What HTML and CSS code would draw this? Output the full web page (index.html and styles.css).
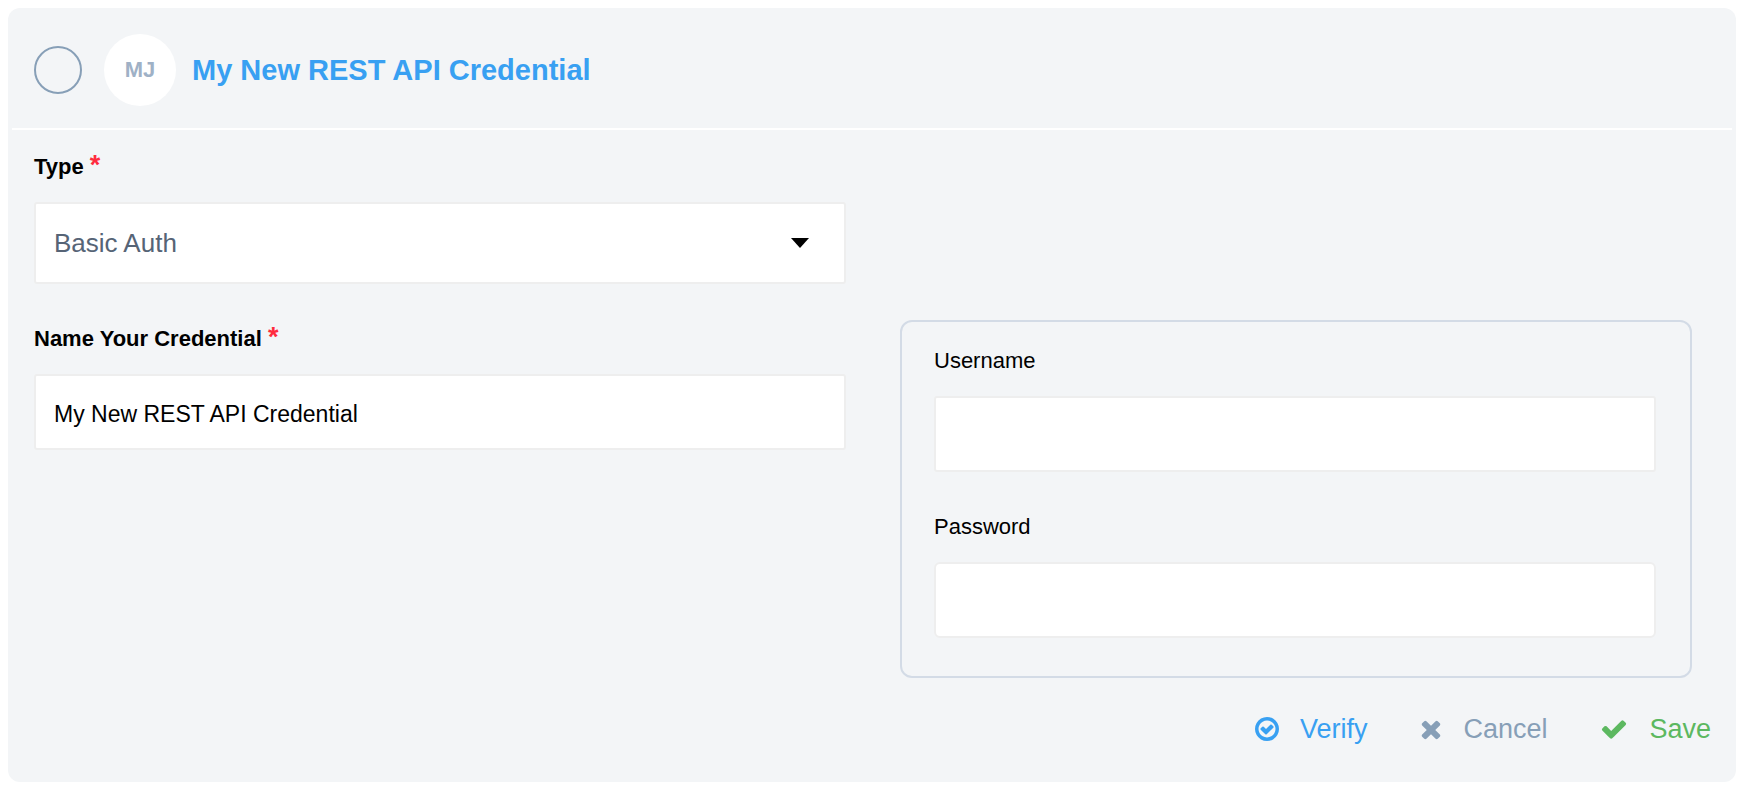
FILE: index.html
```html
<!DOCTYPE html>
<html lang="en">
<head>
<meta charset="utf-8">
<meta name="viewport" content="width=device-width, initial-scale=1">
<title>Credential</title>
<link rel="stylesheet" href="styles.css">
</head>
<body>
<form class="card">
  <header class="card-header">
    <input class="pick" type="checkbox" aria-label="Select credential">
    <span class="avatar">MJ</span>
    <h1 class="title"><a href="#credential">My New REST API Credential</a></h1>
  </header>
  <div class="fields">
    <div class="field field-type">
      <label class="label label-strong" for="type">Type <span class="required">*</span></label>
      <div class="select-wrap">
        <select class="control select" id="type" required>
          <option>Basic Auth</option>
        </select>
        <svg class="caret" viewBox="0 0 18 10" aria-hidden="true"><path d="M0 0h18L9 10z"/></svg>
      </div>
    </div>
    <div class="field field-name">
      <label class="label label-strong" for="name">Name Your Credential <span class="required">*</span></label>
      <input class="control" id="name" type="text" value="My New REST API Credential" required>
    </div>
    <fieldset class="login" aria-label="Basic Auth">
      <div class="field">
        <label class="label" for="username">Username</label>
        <input class="control" id="username" type="text">
      </div>
      <div class="field">
        <label class="label" for="password">Password</label>
        <input class="control control-password" id="password" type="password">
      </div>
    </fieldset>
  </div>
  <footer class="actions">
    <button class="action verify" type="button">
      <svg class="icon" viewBox="128 0 1536 1792" aria-hidden="true"><path d="M1299 813l-422 422q-19 19-45 19t-45-19l-294-294q-19-19-19-45t19-45l102-102q19-19 45-19t45 19l147 147 275-275q19-19 45-19t45 19l102 102q19 19 19 45t-19 45zm141 83q0-148-73-273t-198-198-273-73-273 73-198 198-73 273 73 273 198 198 273 73 273-73 198-198 73-273zm224 0q0 209-103 385.5t-279.5 279.5-385.5 103-385.5-103-279.5-279.5-103-385.5 103-385.5 279.5-279.5 385.5-103 385.5 103 279.5 279.5 103 385.5z"/></svg>
      Verify
    </button>
    <button class="action cancel" type="button">
      <svg class="icon" viewBox="192 0 1408 1792" aria-hidden="true"><path d="M1490 1322q0 40-28 68l-136 136q-28 28-68 28t-68-28l-294-294-294 294q-28 28-68 28t-68-28l-136-136q-28-28-28-68t28-68l294-294-294-294q-28-28-28-68t28-68l136-136q28-28 68-28t68 28l294 294 294-294q28-28 68-28t68 28l136 136q28 28 28 68t-28 68l-294 294 294 294q28 28 28 68z"/></svg>
      Cancel
    </button>
    <button class="action save" type="submit">
      <svg class="icon" viewBox="0 0 1792 1792" aria-hidden="true"><path d="M1671 566q0 40-28 68l-724 724-136 136q-28 28-68 28t-68-28l-136-136-362-362q-28-28-28-68t28-68l136-136q28-28 68-28t68 28l294 295 656-657q28-28 68-28t68 28l136 136q28 28 28 68z"/></svg>
      Save
    </button>
  </footer>
</form>
</body>
</html>
```

FILE: styles.css
```css
* { box-sizing: border-box; }

body {
  margin: 0;
  padding: 8px 12px 6px 8px;
  background: #fff;
  color: #000;
  font-family: "Liberation Sans", Arial, sans-serif;
  font-size: 22px;
}

.card {
  border-radius: 12px;
  background: #f3f5f7;
}

.card-header {
  display: flex;
  align-items: center;
  margin: 0 4px;
  padding: 26px 22px 22px;
  border-bottom: 2px solid #fff;
}

.pick {
  appearance: none;
  flex: none;
  width: 48px;
  height: 48px;
  margin: 0 22px 0 0;
  border: 2px solid #879fb7;
  border-radius: 50%;
}

.pick:checked { background: #38a0f2; }

.avatar {
  display: flex;
  flex: none;
  align-items: center;
  justify-content: center;
  width: 72px;
  height: 72px;
  margin-right: 16px;
  border-radius: 50%;
  background: #fff;
  color: #9fb1c6;
  font-size: 22px;
  font-weight: bold;
}

.title {
  margin: 0;
  font-size: 29px;
  line-height: 36px;
}

.title a {
  color: #38a0f2;
  text-decoration: none;
}

.fields {
  display: grid;
  grid-template-columns: 812fr 792fr;
  gap: 36px 54px;
  align-items: start;
  padding: 18px 44px 0 26px;
}

.field-type,
.field-name { grid-column: 1; }

.label {
  display: block;
  margin-bottom: 16px;
  line-height: 38px;
}

.label-strong { font-weight: bold; }

.required {
  color: #ff2b3e;
  font-size: 27px;
  line-height: 1;
}

.control {
  display: block;
  width: 100%;
  height: 76px;
  padding: 4px 18px 0;
  border: 2px solid #eee;
  border-radius: 3px;
  background: #fff;
  color: #000;
  font: inherit;
  font-size: 23px;
}

.control-password { border-radius: 6px; }

.select-wrap { position: relative; }

.select {
  appearance: none;
  height: 82px;
  padding: 0 56px 0 18px;
  color: #566476;
  font-size: 26px;
}

.caret {
  position: absolute;
  top: 36px;
  right: 37px;
  width: 18px;
  height: 10px;
  pointer-events: none;
}

.login {
  display: grid;
  grid-column: 2;
  grid-row: 2;
  gap: 36px;
  min-width: 0;
  margin: 0;
  padding: 20px 34px 38px 32px;
  border: 2px solid #d3dbe6;
  border-radius: 12px;
}

.actions {
  display: flex;
  justify-content: flex-end;
  gap: 53px;
  padding: 31px 25px 33px;
}

.action {
  display: flex;
  align-items: center;
  gap: 21px;
  padding: 0;
  border: 0;
  background: none;
  font: inherit;
  font-size: 27px;
  line-height: 40px;
}

.icon {
  height: 28px;
  fill: currentColor;
}

.verify { color: #38a0f2; }
.cancel { color: #879fb7; }
.save { color: #5cb860; }
```
